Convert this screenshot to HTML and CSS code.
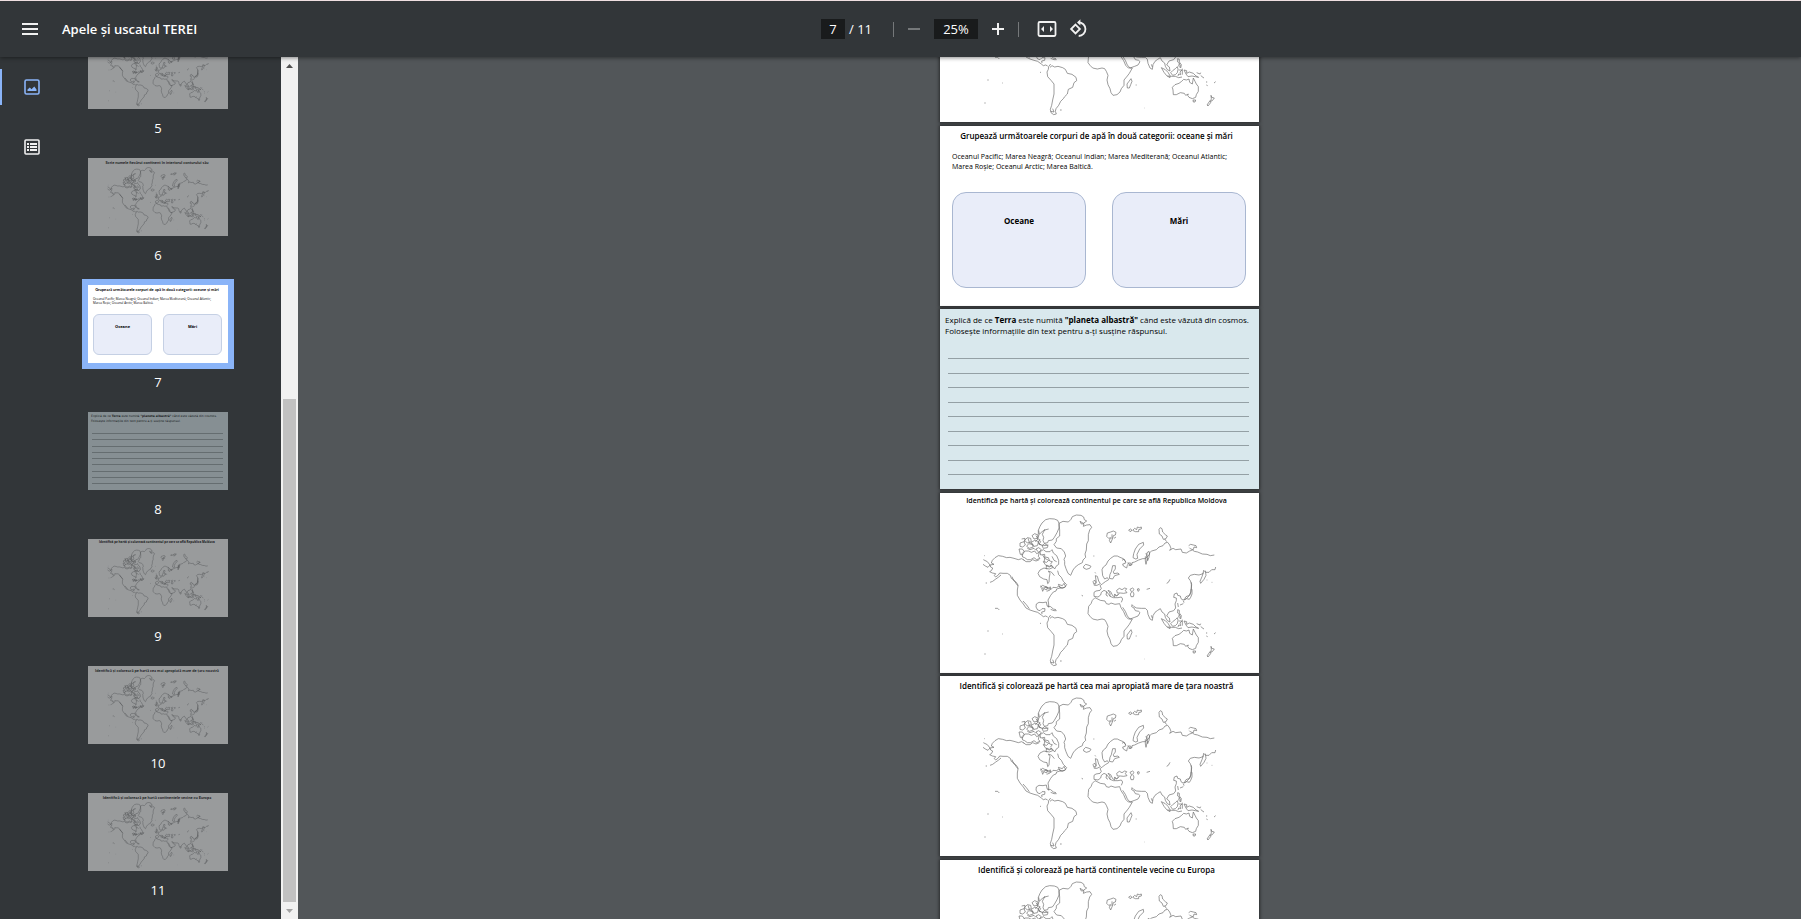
FILE: index.html
```html
<!DOCTYPE html>
<html lang="ro">
<head>
<meta charset="utf-8">
<title>Apele și uscatul TEREI</title>
<link rel="stylesheet" href="styles.css">
</head>
<body>
<svg class="defs" aria-hidden="true">
  <symbol id="world" viewBox="0 0 957 540">
    <g transform="translate(-30 -22)">
      <!-- North America -->
      <path d="M283 224l-8-5-10 3-13-4-12-3-10 1-12-4-13-2-10 6-8 8-3 8 8 4-12 2 2 6 6 3-3 7-6 4 8 4 10 2-4 6 4 4 8-6 4-6 10 1 13 0 9 6 3 9 8 5 6 10 6 8-2 12 0 16 8 14 10 12 8 12 12 6 12 4 11 3 11 8 6 5 7-2 6 3M246 273l5 12 8 5 6 10M279 346l10 11 9 12M336 385l-1-6 9-2 1-8-9 0-6 6-7-2-5-9 1-9 8-5 12 1 10-2 2 10 5 6 0-10-2-12 8-14 8-10 8-3 2-6 10-3 14-2 6-8-10-10-6-12-8-8-3-12"/>
      <path d="M352 250l-10-3-12 6-6 10 5 10 12 7 10 2 2 12 4-4 1-16 2-10-5-8 10 4 8 10M330 305l8-6 8 4 6 2-2 8-8-4-4 8-3-10M345 303l10 3 8-2M332 300l6 8 12-4 4 6 8-2M350 317l10-4 2-8M361 313l8-8 10 1 7-4 8 4M385 296l12 4 5-7 5 10-9 5-8-2z"/>
      <path d="M180 290l8-3 8-6 10-7 7-6M162 210h2M160 222l12 6 8 10-6 7-8-4-7-5M167 292h4M195 368l8 0 5 5M172 436h4M216 445h2M163 505h4M330 413h3M352 361l10 2 8 7 8 2M362 371l10 4 8 0"/>
      <!-- Arctic islands -->
      <path d="M387 113l-4-9-10-4-14-1-12 3-11 10-6 10-5 12 0 12M356 130l-8 2-10 4-10 10-2-12M387 113l0 14-6 14-8 14-6 8-12 2-2 6-10 2-4-8 2-10-4-9 8-16M327 146l-3 12 8 10-5 8 14 4 14-2M306 150l8-6 10 4-2 10-10 2zM284 164l8-8 10 2 2 10-12 4zM270 182l0-10 12-4 4 10-8 6zM290 182l6-8 10 2 4 8-12 4zM304 170l10-6 12 4-4 12-10 2zM275 160l10-2-2 12M318 150l6 10-8 8M330 160l-6 12 10 6M294 158l4 12 12 8"/>
      <path d="M267 190l10 0 6 8-6 10-6-2zM278 214l-2-10 8-8 12 0 8 4 10-4 6 8 8-4-3 12 5 6-10 4-8-6-10 6-10 0-8-6zM280 222l8 6 12 0 8-6 10 4 10-4M330 198l10-6 8 6 12 0 6-6 4 10 10 8 6 14 0 12-8 6-4 8-8-10-8 4-10-4-8-12 10 2 6-6-12-6 0-12-12 2zM336 180l8-6 10 6-2 6-12 2zM345 214l10 2 4 10 8 2-6 8M350 238l8 4 6-4 4 8-10 4-10-2zM318 190l8-4 8 6-8 8zM292 188l8 4 12-4 6 6M338 208l6 10-2 12M366 212l6 12 8 4"/>
      <!-- Greenland and Iceland -->
      <path d="M387 113l12-6 16 2 8-8 4-8 12-5 14 1 8 5 2 8 7 4-10 7-10-6 4 8 8-1-2 8 10-4 10-1 5 8-6 8-4 14 0 18-5 10-1 18-4 12 2 10-8 8-2 8-12 6-10 8-6 8-7 16-8-6-6-14-4-12 0-10-2-6 5-10-4-12-9-10-14-2-8-10 7-10 0-8 10-8 0-18zM461 242l6-6 10 3 6 3-4 6-10 3-8-4zM490 211h3M455 329l4 2"/>
      <!-- South America -->
      <path d="M362 388l-6 8-1 8-4 8 2 14 10 11 9 11 0 30-4 18-3 16-4 12 2 10 8 6 8-2-3-8 2-8 8-10 6-12 8-8 4-6 8-8 3-14 13-6 4-14 8-6-2-10-12-9-14-3-6-12-8-5-14-4-10 2-8-4-6 5M362 530l10 2-4-10M390 526h5M643 520h1"/>
      <!-- Africa -->
      <path d="M495 336l-8 8-4 10-7 8-1 10-1 12 6 8 8 8 14 3 14-3 8 2 5 8 5 12-3 14 3 14 6 12 3 12 6 8 12-2 9-8 4-10 8-10 0-16 10-12 6-8 9-16-12 0-8-8-6-14-8-12-4-12-14 2-12-4-6 4-8-2-4-8-14-2zM592 460l-1-12 6-8 6-8 3 8-4 10-4 10zM617 451h3"/>
      <!-- Europe -->
      <path d="M518 270l-2-18 4-8 8-6 6-12 8-8 10-7 10 0 8 4 10 4 6 8 0 6-8 2 2 6 10 6 2-8 4-6 4 6 6-2 0-6 8-2 12-6 12-4 8 0 5-6 0-12 6-4 2 8-8 10 2 10 4-10 2-14 6-5 14-4 8-8 12-4 6-8 8-2 6 8 4 10-4 6 10-6 8 4 16-2 4 10 12 2 10-6 8-3 6 4 10 2 14 6 14 1 10 4 12-2M518 270l6 10 8-4 4 6-10 6-8 6-8 6 4 8-4 6-12 2-6 4 0 12 12 2 8-6 2-8 8-6 8 4 6 8 4 6 0-10-6-8 8 4 6 12 6 4 0-8 6 4 8-6M548 240l8 0 0 10-6 8 2 6 12-2 4 4-14 4-6 10-10-2 2-12 4-8zM496 270l6 2 4 14 5 8-10 5-8 0 6-8zM489 288l5-5 3 7-5 6zM495 260l2 3M530 318l-2 10 6 4M562 322l-2-8 8-6 8 4 8-5 6 2-4 6 5 6-10 2-10-1zM540 332l10 4 14 0 10-2 4 6-4 10"/>
      <path d="M600 311l8-4 4 4-4 6 4 8-2 8-7 0-2-8 4-6zM622 310l5-1 1 5-4 3zM650 311l10-3M710 293l5-3 5-9M553 325l6 6 6-4"/>
      <!-- Asia -->
      <path d="M857 244l-2 8-10 0-8 8-10 0-6-6-2 10-12 4-14-2-12 3-6 8 6 8 4 12-2 20-4 12-10 10-10 4-6-4-2-8-8-2-2-7-8 3-2 10 8 2 0 8-4 10 2 12-6 8-14 4-7 12 8 6 2 12-8-4-6-10-2-10-8-6-5-10-8 5-8 6-6 10-2 14-7-4-6-14-2-12-6-6-12 0-14-1-8-4-6-6-1 6 7 4 4 8 10 2 4 4-6 10-10 4-14 5-8-9-6-14-8-12"/>
      <path d="M826 255l2 14-6 12-10 12-2-6 6-14 4-12M830 283h2M845 290h2M762 343l8-4 8 2 4-6 4-10 0-14-3-2-1 12-4 8-10 4-4 6M760 345l2 6M784 290l0 18M743 352l2 12M750 358l10-4M664 389l3 8"/>
      <path d="M640 170l-14 6-10 14-5 14-2 12 8 4 6-2-2-12 8-16 12-12zM648 202l4 16-4 18-2-10 0-14M530 152l2-10 10-3 8-3 8 4-2 8-6 2-2 8-6 14-4-8 4-8-6 2zM546 146l0 14M552 158l6-4M596 133l6-3 4 4-6 4zM608 134l6-6 6 4 2-8 6 2 6-2 0 6-8 2 0 6-10 0zM687 131l4-5 5 3 2 10 8 8 6 4-4 8-8 2-4-10-8-6zM776 180l6-4 8 2 8 2 2 6-8-2-2 8-8-2-4-4M704 160l6 8M576 224l6-4 6 10M592 232l10 0 2 6-8 2"/>
      <!-- South-east Asia and Oceania -->
      <path d="M694 399l12 6 8 8 6 10 0 6-10-6-8-10zM712 424l12 1 12 0 10 4 10-2M722 414l6-6 8-6 6-6 2 8-2 10-6 6-8 2zM746 406l10 0-6 6 2 8-6-2-2 6M743 372l5 2 0 8 6 8-2 10-6-6 2-8-5-4zM748 386l4 10M762 406l8 2 0 8 8-4 12 4 8 8 8 4-10-2-10-2-12 2-6-8zM800 414l10 4 2-4M812 422l4 4 6 4M830 440l0 4M829 451l4 2M852 445l5-4M757 402l0 18"/>
      <path d="M727 458l8-8 12-4 8-6 6-6 8 2 8-3 2 10 8 5 3-18 5 10 4 8 6 8 0 14-6 10-2 8-10 4-10-4-4-6 2-4-8 4-4-6-12-2-12 6-9 0-1-14zM789 496l8 0-2 6-5 0zM843 482l2 6 8 2-6 8-5 2 2-8zM840 498l2 6-8 10-3-3z"/>
    </g>
  </symbol>
</svg>

<header class="toolbar">
  <div class="toolbar-start">
    <button class="icon-button" type="button" aria-label="Meniu">
      <svg width="24" height="24" viewBox="0 0 24 24" fill="currentColor"><path d="M4 6h16v2H4zM4 11h16v2H4zM4 16h16v2H4z"/></svg>
    </button>
    <h1 class="doc-title">Apele și uscatul TEREI</h1>
  </div>
  <div class="controls">
    <input class="field field-page" type="text" value="7" aria-label="Pagina">
    <span class="page-total">/ 11</span>
    <span class="separator"></span>
    <button class="icon-button small" type="button" aria-label="Micșorează" disabled>
      <svg width="14" height="14" viewBox="0 0 14 14" fill="currentColor"><path d="M1 6h12v2H1z"/></svg>
    </button>
    <input class="field field-zoom" type="text" value="25%" aria-label="Nivel de zoom">
    <button class="icon-button small" type="button" aria-label="Mărește">
      <svg width="14" height="14" viewBox="0 0 14 14" fill="currentColor"><path d="M1 6h5V1h2v5h5v2H8v5H6V8H1z"/></svg>
    </button>
    <span class="separator"></span>
    <button class="icon-button fit" type="button" aria-label="Potrivește la lățime">
      <svg width="20" height="20" viewBox="0 0 20 20"><rect x="1.5" y="3" width="17" height="14" rx="1.2" fill="none" stroke="currentColor" stroke-width="1.8"/><path d="M7 7v6l-3-3zM13 7v6l3-3z" fill="currentColor"/></svg>
    </button>
    <button class="icon-button" type="button" aria-label="Rotește în sens antiorar">
      <svg width="20" height="20" viewBox="0 0 20 20" fill="none" stroke="currentColor" stroke-width="1.8"><path d="M6.500 5.600l4.400 4.400-4.400 4.400L2.100 10z"/><path d="M9.500 3.300a6.700 6.700 0 1 1 .2 13.700"/><path d="M11.400.2v6.400L8 3.400z" fill="currentColor" stroke="none"/></svg>
    </button>
  </div>
  <div class="toolbar-end"></div>
</header>

<div class="viewer">
  <nav class="rail" aria-label="Vizualizări">
    <button class="rail-button active" type="button" aria-label="Miniaturi">
      <svg width="16" height="16" viewBox="0 0 16 16"><rect x="1" y="1" width="14" height="14" rx="1.500" fill="none" stroke="currentColor" stroke-width="1.600"/><path d="M3.500 12V10.500L5.800 8.500l1.700 1.700L10.300 7.500l2.200 3V12z" fill="currentColor"/></svg>
    </button>
    <button class="rail-button" type="button" aria-label="Structura documentului">
      <svg width="16" height="16" viewBox="0 0 16 16"><rect x="1" y="1" width="14" height="14" rx="1" fill="none" stroke="currentColor" stroke-width="1.600"/><path d="M3 4h2v2H3zM6 4h7v2H6zM3 7h2v2H3zM6 7h7v2H6zM3 10h2v2H3zM6 10h7v2H6z" fill="currentColor"/></svg>
    </button>
  </nav>

  <nav class="thumbs" aria-label="Pagini">
    <a class="thumb" href="#p5">
      <span class="sheet"><svg class="map"><use href="#world"/></svg></span>
      <span class="num">5</span>
    </a>
    <a class="thumb" href="#p6">
      <span class="sheet"><span class="title">Scrie numele fiecărui continent în interiorul conturului său</span><svg class="map"><use href="#world"/></svg></span>
      <span class="num">6</span>
    </a>
    <a class="thumb current" href="#p7">
      <span class="sheet">
        <span class="title">Grupează următoarele corpuri de apă în două categorii: oceane și mări</span>
        <span class="words">Oceanul Pacific; Marea Neagră; Oceanul Indian; Marea Mediterană; Oceanul Atlantic;<br>Marea Roșie; Oceanul Arctic; Marea Baltică.</span>
        <span class="groups"><b class="group">Oceane</b><b class="group">Mări</b></span>
      </span>
      <span class="num">7</span>
    </a>
    <a class="thumb" href="#p8">
      <span class="sheet blue">
        <span class="task">Explică de ce <b>Terra</b> este numită <b>"planeta albastră"</b> când este văzută din cosmos.<br>Folosește informațiile din text pentru a-ți susține răspunsul.</span>
        <span class="lines"><i></i><i></i><i></i><i></i><i></i><i></i><i></i><i></i><i></i></span>
      </span>
      <span class="num">8</span>
    </a>
    <a class="thumb" href="#p9">
      <span class="sheet"><span class="title long">Identifică pe hartă și colorează continentul pe care se află Republica Moldova</span><svg class="map"><use href="#world"/></svg></span>
      <span class="num">9</span>
    </a>
    <a class="thumb" href="#p10">
      <span class="sheet"><span class="title">Identifică și colorează pe hartă cea mai apropiată mare de țara noastră</span><svg class="map"><use href="#world"/></svg></span>
      <span class="num">10</span>
    </a>
    <a class="thumb" href="#p11">
      <span class="sheet"><span class="title">Identifică și colorează pe hartă continentele vecine cu Europa</span><svg class="map"><use href="#world"/></svg></span>
      <span class="num">11</span>
    </a>
  </nav>

  <div class="scrollbar" aria-hidden="true">
    <svg class="arrow" width="17" height="17" viewBox="0 0 17 17"><path d="M5 11h7L8.500 7z" fill="#505050"/></svg>
    <div class="track"><div class="handle"></div></div>
    <svg class="arrow" width="17" height="17" viewBox="0 0 17 17"><path d="M5 7h7l-3.500 4z" fill="#a3a3a3"/></svg>
  </div>

  <main class="document">
    <div class="pages">
      <section class="page" id="p6"><svg class="map"><use href="#world"/></svg></section>
      <section class="page" id="p7">
        <h2 class="title">Grupează următoarele corpuri de apă în două categorii: oceane și mări</h2>
        <p class="words">Oceanul Pacific; Marea Neagră; Oceanul Indian; Marea Mediterană; Oceanul Atlantic;<br>Marea Roșie; Oceanul Arctic; Marea Baltică.</p>
        <div class="groups"><b class="group">Oceane</b><b class="group">Mări</b></div>
      </section>
      <section class="page blue" id="p8">
        <p class="task">Explică de ce <b>Terra</b> este numită <b>"planeta albastră"</b> când este văzută din cosmos.<br>Folosește informațiile din text pentru a-ți susține răspunsul.</p>
        <div class="lines"><i></i><i></i><i></i><i></i><i></i><i></i><i></i><i></i><i></i></div>
      </section>
      <section class="page" id="p9"><h2 class="title long">Identifică pe hartă și colorează continentul pe care se află Republica Moldova</h2><svg class="map"><use href="#world"/></svg></section>
      <section class="page" id="p10"><h2 class="title">Identifică și colorează pe hartă cea mai apropiată mare de țara noastră</h2><svg class="map"><use href="#world"/></svg></section>
      <section class="page" id="p11"><h2 class="title">Identifică și colorează pe hartă continentele vecine cu Europa</h2><svg class="map"><use href="#world"/></svg></section>
    </div>
  </main>
</div>
</body>
</html>
```
FILE: styles.css
```css
* { box-sizing: border-box; }

body {
  margin: 0;
  height: 100vh;
  display: flex;
  flex-direction: column;
  overflow: hidden;
  background: #525659;
  color: #fff;
  font-family: "Open Sans", "Noto Sans", sans-serif;
  font-size: 13px;
}

h1, h2, p { margin: 0; }
button { padding: 0; border: 0; background: none; color: inherit; }

.defs { position: absolute; width: 0; height: 0; }

/* Toolbar */
.toolbar {
  display: flex;
  align-items: center;
  flex: none;
  height: 57px;
  border-top: 1px solid #f0dfe1;
  background: #323639;
  box-shadow: 0 1px 4px rgba(0, 0, 0, .45);
  position: relative;
  z-index: 1;
}
.toolbar-start { flex: 1 1 0; display: flex; align-items: center; padding-left: 18px; }
.toolbar-end { flex: 1 1 0; }
.icon-button { display: flex; align-items: center; justify-content: center; color: #f1f1f1; }
.icon-button:disabled { color: #75787a; }
.doc-title { margin-left: 20px; font-size: 13px; font-weight: 600; line-height: 20px; }

.controls { display: flex; align-items: center; margin-left: 91px; }
.field {
  height: 20px;
  padding: 0;
  border: 0;
  background: #191b1c;
  color: #fff;
  font: inherit;
  text-align: center;
}
.field-page { width: 24px; }
.field-zoom { width: 44px; }
.page-total { width: 28px; margin-left: 4px; }
.separator { width: 1px; height: 15px; margin: 0 16px; background: #75787a; }
.controls .separator + .icon-button.small { margin-left: -3px; }
.icon-button.small { margin: 0 13px; }
.icon-button.small + .separator { margin-left: 0; }
.icon-button.fit { margin: 0 12px 0 2px; }

/* Side panel */
.viewer { flex: 1; display: flex; min-height: 0; }
.rail { flex: none; width: 64px; padding-top: 12px; background: #323639; }
.rail-button {
  display: flex;
  align-items: center;
  justify-content: center;
  width: 64px;
  height: 36px;
  margin-bottom: 24px;
  color: #f1f1f1;
}
.rail-button.active { color: #8ab4f8; box-shadow: inset 2px 0 #8ab4f8; }

.thumbs {
  flex: none;
  width: 217px;
  display: flex;
  flex-direction: column;
  overflow: hidden;
  background: #323639;
}
.thumb {
  flex: none;
  display: flex;
  flex-direction: column;
  width: 140px;
  height: 127px;
  margin-left: 24px;
  color: #fff;
  text-decoration: none;
}
.thumb:first-child { margin-top: -26px; }
.num { line-height: 38px; text-align: center; }

.scrollbar { flex: none; width: 17px; display: flex; flex-direction: column; background: #f1f1f1; }
.arrow { flex: none; display: block; }
.track { flex: 1; display: flex; flex-direction: column; justify-content: flex-end; padding: 0 2px; }
.handle { height: 60.7%; background: #c1c1c1; }

/* Pages */
.document { flex: 1; overflow: hidden; padding-left: 100px; }
.pages { display: flex; flex-direction: column; align-items: center; margin-top: -115px; }
.page, .sheet {
  display: flex;
  flex-direction: column;
  flex: none;
  position: relative;
  overflow: hidden;
  background: #fff;
  color: #000;
  white-space: nowrap;
}
.page { width: 319px; height: 180px; margin-bottom: 3px; box-shadow: 0 0 3px 1px rgba(0, 0, 0, .5); }
.page:nth-child(odd) { margin-bottom: 4px; }
.page.blue, .sheet.blue { background: #d9e8ed; }

.title { padding-right: 6px; font-size: 8px; font-weight: 600; line-height: 20px; text-align: center; }
.title.long { font-size: 7px; line-height: 16px; }
.map {
  position: absolute;
  inset: 0;
  width: 100%;
  height: 100%;
  fill: none;
  stroke: #6a6a6a;
  stroke-width: 2;
}
.words { margin-top: 6px; padding-left: 12px; font-size: 7px; line-height: 10px; }
.groups { display: grid; grid-template-columns: 1fr 1fr; gap: 26px; margin: 20px 13px 0 12px; }
.group {
  height: 96px;
  border: 1px solid #a9b7d1;
  border-radius: 14px;
  background: #e9edf9;
  font-size: 8px;
  line-height: 56px;
  text-align: center;
}
.task { padding: 5px 0 0 5px; font-size: 8px; line-height: 11px; }
.lines {
  display: flex;
  flex-direction: column;
  justify-content: space-between;
  height: 117px;
  margin: 22px 10px 0 8px;
}
.lines i { height: 1px; background: #94a0a5; }

/* Thumbnail versions */
.sheet { height: 78px; opacity: .5; }
.current .sheet { opacity: 1; box-shadow: 0 0 0 6px #8ab4f8; }
.sheet .title { padding-right: 2px; font-family: Lato, sans-serif; font-size: 4px; font-weight: 700; line-height: 10px; }
.sheet .title.long { font-family: "Open Sans", sans-serif; font-size: 3px; line-height: 7px; }
.sheet .map { stroke: #707070; stroke-width: 3; }
.sheet .words { margin-top: 2px; padding-left: 5px; font-size: 3px; line-height: 4px; }
.sheet .groups { gap: 11px; margin: 9px 6px 0 5px; }
.sheet .group { height: 41px; border-radius: 6px; border-color: #c5d0e4; font-size: 4px; line-height: 24px; }
.sheet .task { padding: 2px 0 0 3px; font-family: "DejaVu Sans", sans-serif; font-size: 3px; line-height: 5px; }
.sheet .lines { height: 51px; margin: 9px 5px 0 4px; }
.sheet .lines i { background: #98a4a8; }
```
